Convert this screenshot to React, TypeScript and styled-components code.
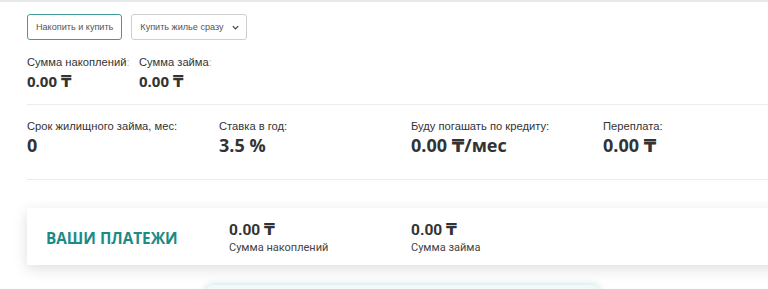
import React from "react";
import styled, { createGlobalStyle } from "styled-components";

const Global = createGlobalStyle`
  html, body { margin: 0; padding: 0; background: #fff; }
  body { overflow: hidden; font-family: "Liberation Sans", Arial, sans-serif; color: #333; }
`;

const Page = styled.div`
  width: 768px;
  height: 289px;
  overflow: hidden;
  border-top: 2px solid #e8e8e8;
  box-sizing: border-box;
`;

const Content = styled.div`
  width: 820px;
  padding: 12px 0 0 27px;
  box-sizing: border-box;
`;

const Toolbar = styled.div`
  display: flex;
  gap: 9px;
`;

const ToggleButton = styled.button<{ $active?: boolean }>`
  height: 26px;
  box-sizing: border-box;
  padding: 0 ${(p) => (p.$active ? "8px" : "6px")} 0 8px;
  border-radius: 3px;
  background: #fff;
  border: 1px solid ${(p) => (p.$active ? "#3f9b97" : "#cfcfcf")};
  font-family: "Liberation Sans", Arial, sans-serif;
  font-size: 9.1px;
  color: #555;
  display: flex;
  align-items: center;
  gap: 7px;
  white-space: nowrap;
`;

const Chevron = styled.svg`
  width: 9px;
  height: 9px;
`;

const SumRow = styled.div`
  display: flex;
  gap: 12px;
  margin-top: 15px;
  padding-bottom: 12px;
  border-bottom: 1px solid #ececec;
`;

const Stat = styled.div<{ $w?: number }>`
  display: flex;
  flex-direction: column;
  width: ${(p) => (p.$w ? `${p.$w}px` : "auto")};
  white-space: nowrap;
`;

const Label = styled.div`
  font-size: 11.2px;
  line-height: 14px;
  color: #333;
`;

const Colon = styled.span`
  color: #bbb;
`;

const Value = styled.div<{ $size: number }>`
  font-family: "Open Sans", "DejaVu Sans", sans-serif;
  font-weight: 700;
  font-size: ${(p) => p.$size}px;
  color: #333;
  line-height: 22px;
  margin-top: 1px;
`;

const InfoRow = styled.div`
  display: grid;
  grid-template-columns: repeat(4, 192px);
  padding: 14px 0 23px;
  border-bottom: 1px solid #ececec;
`;

const Card = styled.div`
  margin-top: 28px;
  height: 57px;
  background: #fff;
  box-shadow: 0 4px 14px rgba(0, 0, 0, 0.13);
  display: flex;
  align-items: center;
`;

const CardTitle = styled.div`
  font-family: "Open Sans", sans-serif;
  font-weight: 700;
  font-size: 15.3px;
  color: #1c8a85;
  width: 202px;
  padding-left: 19px;
  padding-top: 2px;
  box-sizing: border-box;
`;

const CardStat = styled.div`
  width: 182px;
  display: flex;
  flex-direction: column;
  white-space: nowrap;
  padding-top: 3px;
`;

const CardValue = styled.div`
  font-family: "Roboto", "DejaVu Sans", sans-serif;
  font-weight: 700;
  font-size: 15.5px;
  color: #333;
  line-height: 19px;
`;

const CardLabel = styled.div`
  font-family: "Roboto", sans-serif;
  font-size: 11px;
  color: #444;
  line-height: 15px;
`;

const Hint = styled.div`
  margin: 20px 0 0 178px;
  width: 395px;
  height: 20px;
  border-radius: 8px;
  background: #f1fafa;
  box-shadow: 0 -2px 8px rgba(0, 0, 0, 0.06), 0 0 6px rgba(120, 210, 210, 0.3);
`;

export default function App() {
  return (
    <>
      <Global />
      <Page>
        <Content>
          <Toolbar>
            <ToggleButton $active>Накопить и купить</ToggleButton>
            <ToggleButton>
              Купить жилье сразу
              <Chevron viewBox="0 0 10 10">
                <path d="M2 3.5 L5 6.5 L8 3.5" fill="none" stroke="#444" strokeWidth="1.4" />
              </Chevron>
            </ToggleButton>
          </Toolbar>
          <SumRow>
            <Stat $w={100}>
              <Label>
                Сумма накоплений<Colon>:</Colon>
              </Label>
              <Value $size={15}>0.00 ₸</Value>
            </Stat>
            <Stat>
              <Label>
                Сумма займа<Colon>:</Colon>
              </Label>
              <Value $size={15}>0.00 ₸</Value>
            </Stat>
          </SumRow>
          <InfoRow>
            <Stat>
              <Label>Срок жилищного займа, мес:</Label>
              <Value $size={18}>0</Value>
            </Stat>
            <Stat>
              <Label>Ставка в год:</Label>
              <Value $size={18}>3.5 %</Value>
            </Stat>
            <Stat>
              <Label>Буду погашать по кредиту:</Label>
              <Value $size={18}>0.00 ₸/мес</Value>
            </Stat>
            <Stat>
              <Label>Переплата:</Label>
              <Value $size={18}>0.00 ₸</Value>
            </Stat>
          </InfoRow>
          <Card>
            <CardTitle>ВАШИ ПЛАТЕЖИ</CardTitle>
            <CardStat>
              <CardValue>0.00 ₸</CardValue>
              <CardLabel>Сумма накоплений</CardLabel>
            </CardStat>
            <CardStat>
              <CardValue>0.00 ₸</CardValue>
              <CardLabel>Сумма займа</CardLabel>
            </CardStat>
          </Card>
          <Hint />
        </Content>
      </Page>
    </>
  );
}
